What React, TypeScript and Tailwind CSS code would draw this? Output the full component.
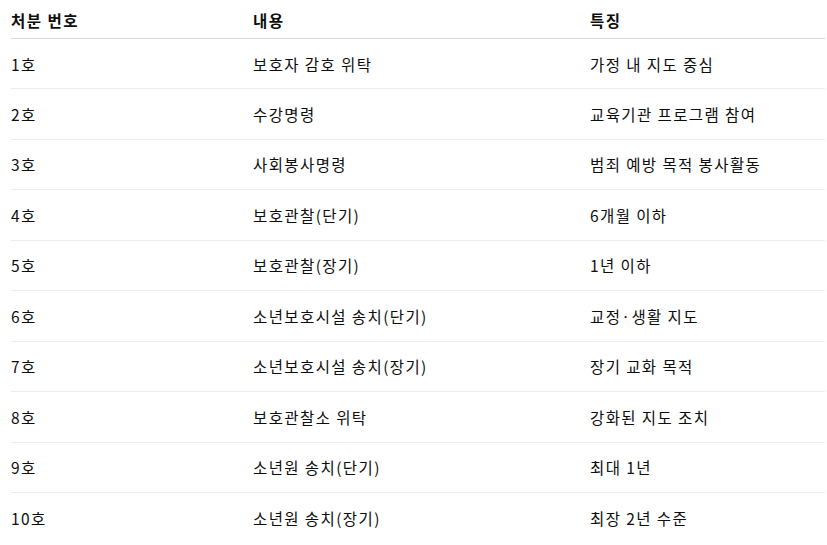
import React from "react";

const rows: [string, string, string][] = [
  ["1호", "보호자 감호 위탁", "가정 내 지도 중심"],
  ["2호", "수강명령", "교육기관 프로그램 참여"],
  ["3호", "사회봉사명령", "범죄 예방 목적 봉사활동"],
  ["4호", "보호관찰(단기)", "6개월 이하"],
  ["5호", "보호관찰(장기)", "1년 이하"],
  ["6호", "소년보호시설 송치(단기)", "교정·생활 지도"],
  ["7호", "소년보호시설 송치(장기)", "장기 교화 목적"],
  ["8호", "보호관찰소 위탁", "강화된 지도 조치"],
  ["9호", "소년원 송치(단기)", "최대 1년"],
  ["10호", "소년원 송치(장기)", "최장 2년 수준"],
];

export default function App() {
  return (
    <div
      className="w-[827px] h-[545px] bg-white overflow-hidden text-[#0d0d0d]"
      style={{ fontFamily: '"Noto Sans CJK KR", "Noto Sans", sans-serif' }}
    >
      <div className="ml-[11px] w-[814px]">
        <div className="grid grid-cols-[242px_337px_1fr] h-[39px] items-center border-b border-[#d9d9d9] text-[15.5px] tracking-[1.5px] font-bold pt-[3px]">
          <div>처분 번호</div>
          <div>내용</div>
          <div>특징</div>
        </div>
        {rows.map((r, i) => (
          <div
            key={i}
            className={`grid grid-cols-[242px_337px_1fr] h-[50.44px] items-center text-[15.5px] tracking-[1.4px] pt-[1px] ${
              i < rows.length - 1 ? "border-b border-[#ececec]" : ""
            }`}
          >
            <div>{r[0]}</div>
            <div>{r[1]}</div>
            <div>{r[2]}</div>
          </div>
        ))}
      </div>
    </div>
  );
}
